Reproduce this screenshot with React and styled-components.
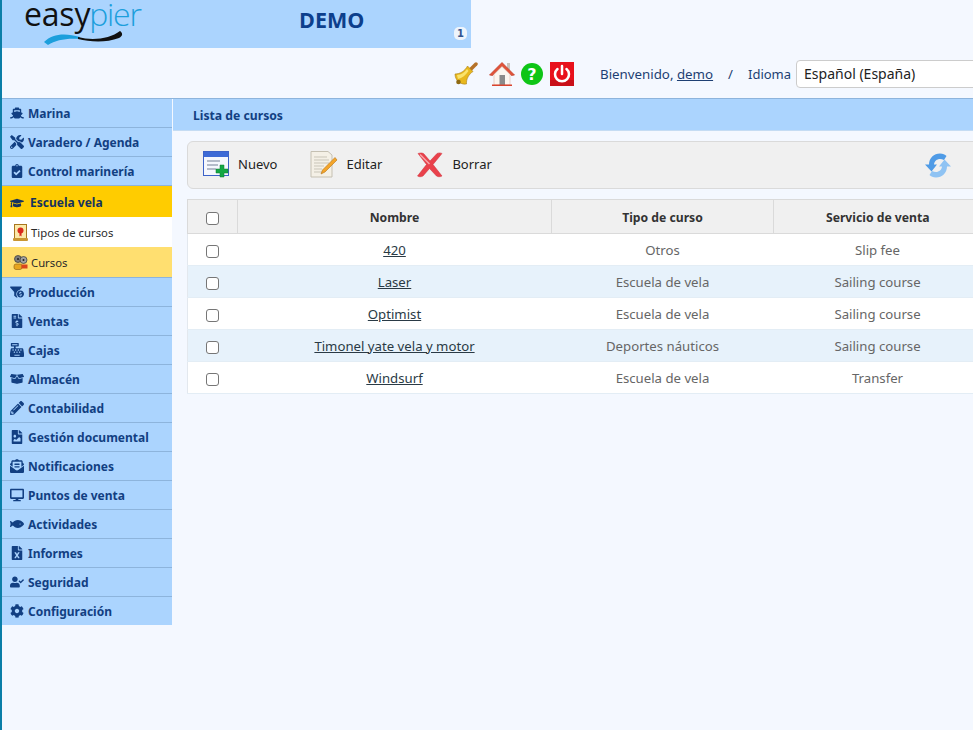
import React from 'react';
import styled, { createGlobalStyle } from 'styled-components';
import {
  FaShip, FaTools, FaClipboardCheck, FaGraduationCap, FaFunnelDollar, FaFileInvoiceDollar,
  FaCashRegister, FaBoxOpen, FaPencilAlt, FaFileImage, FaEnvelopeOpenText, FaDesktop, FaFish,
  FaFileExcel, FaUserCheck, FaCog,
} from 'react-icons/fa';

const Global = createGlobalStyle`
  html, body { margin: 0; padding: 0; height: 100%; overflow: hidden; background: #f4f8ff; }
  body { font-family: "Noto Sans", sans-serif; }
  #root { height: 730px; }
  * { box-sizing: border-box; }
`;

const FONT = `"Noto Sans", "DejaVu Sans", sans-serif`;

const Page = styled.div`
  width: 973px; height: 730px; overflow: hidden;
  border-left: 2px solid #0a7ea8;
  background: #f4f8ff;
  font-family: ${FONT};
`;
const Banner = styled.header`
  width: 469px; height: 48px; background: #abd4fe;
  display: grid; grid-template-columns: 297px 1fr; position: relative;
`;
const LogoBox = styled.div`padding: 0 0 0 22px; position: relative;`;
const LogoText = styled.div`
  font-family: "Open Sans", sans-serif; font-size: 32px; line-height: 24px; letter-spacing: -0.2px;
  color: #111; font-weight: 400; white-space: nowrap; padding-top: 2px;
  span { color: #1c9fdc; font-weight: 300; letter-spacing: -1.2px; margin-left: -1px; }
`;
const LogoSwoosh = styled.svg`display: block; position: absolute; left: 42px; top: 28px;`;
const Demo = styled.div`
  font-family: "Open Sans", sans-serif; font-weight: 700; font-size: 21.5px; color: #0d3f8c;
  padding: 8px 0 0 0; line-height: 24px;
`;
const Badge = styled.span`
  position: absolute; right: 4px; top: 27px; width: 13px; height: 13px; border-radius: 5px;
  background: #eef4fb; color: #33558f; font: 700 10px/13px "DejaVu Sans", sans-serif; text-align: center;
`;
const TopRow = styled.div`
  height: 51px; display: flex; align-items: center; padding: 1px 0 0 452px; white-space: nowrap;
  border-bottom: 1px solid #8db4dc;
`;
const IconLink = styled.a`display: flex; margin-right: ${p => p.$mr}px;`;
const Welcome = styled.span`
  font-size: 13.3px; color: #1d3f73; margin-left: 26px;
  a { color: #1d3f73; text-decoration: underline; }
`;
const Slash = styled.span`font-size: 13.2px; color: #1d3f73; margin: 0 15px;`;
const Lang = styled.span`font-size: 13px; color: #1d3f73; margin-right: 5px;`;
const LangSelect = styled.div`
  width: 200px; height: 28px; flex: none; border: 1px solid #ccc; border-radius: 4px; background: #fff;
  font-size: 14px; line-height: 26px; padding-left: 7px; color: #222;
`;
const Body = styled.div`display: grid; grid-template-columns: 170px 1fr; column-gap: 1px; height: 631px;`;
const Side = styled.nav`display: flex; flex-direction: column;`;
const MenuItem = styled.a`
  height: 29px; flex: none; display: flex; align-items: center; gap: 4px; padding-left: 8px;
  background: #abd4fe; border-bottom: 1px solid #8db4dc; color: #123f82;
  font-size: 12px; font-weight: 700; white-space: nowrap;
  svg { flex: none; width: 14px; height: 14px; color: #123f82; }
  &:last-child { border-bottom: 0; height: 28px; }
`;
const ActiveItem = styled(MenuItem)`
  height: 31px; background: #ffcc00; color: #15335f; border-bottom: 0; gap: 6px; padding-top: 2px;
  svg { color: #15335f; }
`;
const SubItem = styled.a`
  height: ${p => (p.$current ? 30 : 31)}px; flex: none; display: flex; align-items: center; gap: 3px; padding-left: 11px;
  background: ${p => (p.$current ? '#ffffff' : '#ffdf70')};
  border-bottom: ${p => (p.$current ? '0' : '1px solid #8db4dc')};
  color: #2a2a2a; font-size: 11.3px; white-space: nowrap;
`;
const Main = styled.main`min-width: 0; overflow: hidden;`;
const TitleBar = styled.div`
  height: 32px; background: #abd4fe; border-bottom: 1px solid #c5dcf3; padding: 2px 0 0 20px;
  font-size: 12.2px; font-weight: 700; color: #123f82; display: flex; align-items: center;
`;
const Content = styled.div`padding: 10px 0 0 14px; width: 830px;`;
const Toolbar = styled.div`
  height: 48px; background: #f0f0f0; border: 1px solid #dadada; border-radius: 6px;
  display: flex; align-items: center; padding: 0 0 0 15px; white-space: nowrap;
`;
const ToolButton = styled.a`
  display: flex; align-items: center; gap: ${p => p.$gap}px; margin-right: ${p => p.$mr}px;
  font-size: 13px; color: #222; padding-bottom: 1px;
`;
const ToolLabel = styled.span`margin-bottom: 2px;`;
const Refresh = styled.a`display: flex; margin-left: 433px;`;
const Table = styled.table`
  margin-top: 10px; border-collapse: collapse; table-layout: fixed; width: 794px; background: #fff;
  font-size: 13.2px; color: #666;
`;
const Th = styled.th`
  height: 34px; padding: 2px 0 0; background: #f0f0f0; font-size: 12.2px; font-weight: 700; color: #333;
  text-align: center; border-top: 1px solid #dadada; border-bottom: 1px solid #dadada;
  border-left: 1px solid #dadada;
`;
const CheckCell = styled(Th)`padding: 0;`;
const Row = styled.tr`background: ${p => (p.$alt ? '#e7f2fb' : '#fff')};`;
const Td = styled.td`
  height: 32px; padding: 0; text-align: center; border-bottom: 1px solid #e3edf5;
  ${p => p.$first ? 'border-left: 1px solid #e3e8ee;' : ''}
  a { color: #2a3a45; text-decoration: underline; }
`;
const Check = styled.span`
  display: inline-block; width: 13px; height: 13px; border: 1px solid #767676; border-radius: 3px;
  background: #fff; vertical-align: middle; margin-top: ${p => p.$mt || 0}px;
`;

const Bell = () => (
  <svg width="24" height="24" viewBox="0 0 24 24">
    <path d="M16 8 L22 2" stroke="#b5722a" strokeWidth="3.500" strokeLinecap="round" />
    <path d="M1 12 C6 12 11 9 13.500 4 L19 9.500 C15 12 12 17 12.500 22 C6 23 1 18 1 12Z" fill="#e8b81e" stroke="#a97e15" strokeWidth=".6" />
    <path d="M3 13 C7 13 11 10 13 7 L14.500 9 C12 13 8 16 4 17Z" fill="#fae36c" />
    <circle cx="4.500" cy="20" r="2.300" fill="#8f6a12" />
  </svg>
);
const Home = () => (
  <svg width="26" height="26" viewBox="0 0 26 26">
    <rect x="18" y="2" width="3" height="7" fill="#c9c3bd" />
    <path d="M13 1.500 L25.500 14 L22.500 14.500 L13 5.500 L3.500 14.500 L.5 14Z" fill="#e0533a" stroke="#c23b25" strokeWidth=".7" />
    <path d="M5 13.500 L13 5.500 L21 13.500 V24 H5Z" fill="#fbf6f0" stroke="#dfb5a8" strokeWidth=".6" />
    <rect x="10.500" y="14" width="5.500" height="10" fill="#8a8a8a" />
    <rect x="3" y="23.500" width="20" height="1.500" fill="#d9442e" />
  </svg>
);
const Help = () => (
  <svg width="22" height="22" viewBox="0 0 22 22">
    <circle cx="11" cy="11" r="11" fill="#0ec516" />
    <text x="11" y="17" textAnchor="middle" fontFamily="DejaVu Sans" fontWeight="700" fontSize="16" fill="#fff">?</text>
  </svg>
);
const Power = () => (
  <svg width="24" height="24" viewBox="0 0 24 24">
    <rect width="24" height="24" fill="#e8111c" />
    <rect y="18" width="24" height="6" fill="#c90f18" />
    <path d="M7.500 7 A7 7 0 1 0 16.500 7" fill="none" stroke="#fff" strokeWidth="2.500" strokeLinecap="round" />
    <path d="M12 4 V12" stroke="#fff" strokeWidth="2.500" strokeLinecap="round" />
  </svg>
);
const Nuevo = () => (
  <svg width="27" height="27" viewBox="0 0 27 27">
    <rect x=".5" y=".5" width="25" height="24" fill="#f5f7fd" stroke="#3c62c8" />
    <rect x="1" y="1" width="24" height="5" fill="#3d6ad6" />
    <path d="M4 10h13M4 14h11M4 18h9" stroke="#9fa8b8" strokeWidth="1.500" />
    <path d="M17 14h4v4h4v4h-4v4h-4v-4h-4v-4h4z" fill="#14a844" stroke="#0d7a30" strokeWidth=".5" />
  </svg>
);
const Editar = () => (
  <svg width="28" height="27" viewBox="0 0 28 27">
    <path d="M1 .5 H18 L22 4 V26 H1Z" fill="#f4f0e6" stroke="#c5c0b2" />
    <path d="M4 6h13M4 9h15M4 12h15M4 15h10M4 18h8M4 21h8" stroke="#c9c5b8" strokeWidth="1" />
    <path d="M25 6.500 L27 9 L15 21 L11 23 L12.500 19Z" fill="#f4a52a" stroke="#b3741a" strokeWidth=".6" />
  </svg>
);
const Borrar = () => (
  <svg width="26" height="26" viewBox="0 0 26 26">
    <path d="M1 1.500 C4 .5 6 1 7 2 L13 9 L20 1.500 C22 .5 24 1 25 1.500 L16 12.500 L25 24 C23 25 21 25 19.500 24 L12.500 16.500 L6 24 C4 25 2 25 .5 24 L9.500 12.500Z" fill="#e9414b" stroke="#cf2b35" strokeWidth=".5" />
    <path d="M3 2.500 L12.500 12" stroke="#f8a5aa" strokeWidth="1.500" />
  </svg>
);
const RefreshIcon = () => (
  <svg width="26" height="27" viewBox="0 0 26 27">
    <path d="M4 12.500 C4 6 9 1.500 15 1.500 C18 1.500 20 2.500 21.500 4 L19 8 C14 5.500 9.500 8 9 12.500 L12 12.500 L6.500 19.500 L0 12.500Z" fill="#4f9be6" />
    <path d="M22 14.500 C22 21 17 25.500 11 25.500 C8 25.500 6 24.500 4.500 23 L7 19 C12 21.500 16.500 19 17 14.500 L14 14.500 L19.500 7.500 L26 14.500Z" fill="#8fc3f3" />
  </svg>
);
const Diploma = () => (
  <svg width="15" height="17" viewBox="0 0 15 17" style={{ flex: 'none' }}>
    <rect x="1.500" y=".5" width="12" height="14" fill="#fbe9a8" stroke="#a8761e" />
    <rect x="0" y="14" width="15" height="3" rx="1" fill="#c99733" />
    <circle cx="7.500" cy="6.500" r="3" fill="#d9291c" />
    <path d="M6.500 8.500v4l1-1 1 1v-4" fill="#d9291c" />
  </svg>
);
const Reels = () => (
  <svg width="15" height="15" viewBox="0 0 15 15" style={{ flex: 'none' }}>
    <circle cx="5" cy="4" r="3.500" fill="#7d7d7d" stroke="#333" strokeWidth=".7" />
    <circle cx="5" cy="4" r="1" fill="#222" />
    <circle cx="10.500" cy="5" r="3.500" fill="#a0a0a0" stroke="#333" strokeWidth=".7" />
    <circle cx="10.500" cy="5" r="1" fill="#222" />
    <rect x="1" y="9" width="8" height="5.500" rx="2" fill="#e7a51e" stroke="#8a5a10" strokeWidth=".6" />
    <rect x="8.500" y="9.500" width="6" height="4" fill="#d9441c" />
  </svg>
);

const before = [
  [FaShip, 'Marina'],
  [FaTools, 'Varadero / Agenda'],
  [FaClipboardCheck, 'Control marinería'],
];
const after = [
  [FaFunnelDollar, 'Producción'],
  [FaFileInvoiceDollar, 'Ventas'],
  [FaCashRegister, 'Cajas'],
  [FaBoxOpen, 'Almacén'],
  [FaPencilAlt, 'Contabilidad'],
  [FaFileImage, 'Gestión documental'],
  [FaEnvelopeOpenText, 'Notificaciones'],
  [FaDesktop, 'Puntos de venta'],
  [FaFish, 'Actividades'],
  [FaFileExcel, 'Informes'],
  [FaUserCheck, 'Seguridad'],
  [FaCog, 'Configuración'],
];
const rows = [
  ['420', 'Otros', 'Slip fee'],
  ['Laser', 'Escuela de vela', 'Sailing course'],
  ['Optimist', 'Escuela de vela', 'Sailing course'],
  ['Timonel yate vela y motor', 'Deportes náuticos', 'Sailing course'],
  ['Windsurf', 'Escuela de vela', 'Transfer'],
];

export default function App() {
  return (
    <Page>
      <Global />
      <Banner>
        <LogoBox>
          <LogoText>easy<span>pier</span></LogoText>
          <LogoSwoosh width="80" height="18" viewBox="0 0 80 18">
            <path d="M0 14 C9 5 22 5 36 9 L36 11 C22 10 12 12 4 17Z" fill="#1c9fdc" />
            <path d="M34 9 C48 13 66 11 76 3 C79 5 79 8 75 10 C62 15 46 14 34 11Z" fill="#111" />
          </LogoSwoosh>
        </LogoBox>
        <Demo>DEMO</Demo>
        <Badge>1</Badge>
      </Banner>
      <TopRow>
        <IconLink $mr={11}><Bell /></IconLink>
        <IconLink $mr={6}><Home /></IconLink>
        <IconLink $mr={7}><Help /></IconLink>
        <IconLink $mr={0}><Power /></IconLink>
        <Welcome>Bienvenido, <a>demo</a></Welcome>
        <Slash>/</Slash>
        <Lang>Idioma</Lang>
        <LangSelect>Español (España)</LangSelect>
      </TopRow>
      <Body>
        <Side>
          {before.map(([Icon, label]) => (
            <MenuItem key={label}><Icon />{label}</MenuItem>
          ))}
          <ActiveItem><FaGraduationCap />Escuela vela</ActiveItem>
          <SubItem $current><Diploma />Tipos de cursos</SubItem>
          <SubItem><Reels />Cursos</SubItem>
          {after.map(([Icon, label]) => (
            <MenuItem key={label}><Icon />{label}</MenuItem>
          ))}
        </Side>
        <Main>
          <TitleBar>Lista de cursos</TitleBar>
          <Content>
            <Toolbar>
              <ToolButton $gap={8} $mr={33}><Nuevo /><ToolLabel>Nuevo</ToolLabel></ToolButton>
              <ToolButton $gap={8} $mr={35}><Editar /><ToolLabel>Editar</ToolLabel></ToolButton>
              <ToolButton $gap={9} $mr={0}><Borrar /><ToolLabel>Borrar</ToolLabel></ToolButton>
              <Refresh><RefreshIcon /></Refresh>
            </Toolbar>
            <Table>
              <colgroup>
                <col width="50" /><col width="314" /><col width="222" /><col width="208" />
              </colgroup>
              <thead>
                <tr>
                  <CheckCell><Check $mt={2} /></CheckCell>
                  <Th>Nombre</Th>
                  <Th>Tipo de curso</Th>
                  <Th>Servicio de venta</Th>
                </tr>
              </thead>
              <tbody>
                {rows.map((r, i) => (
                  <Row key={r[0]} $alt={i % 2 === 1}>
                    <Td $first><Check $mt={2} /></Td>
                    <Td><a>{r[0]}</a></Td>
                    <Td>{r[1]}</Td>
                    <Td>{r[2]}</Td>
                  </Row>
                ))}
              </tbody>
            </Table>
          </Content>
        </Main>
      </Body>
    </Page>
  );
}
